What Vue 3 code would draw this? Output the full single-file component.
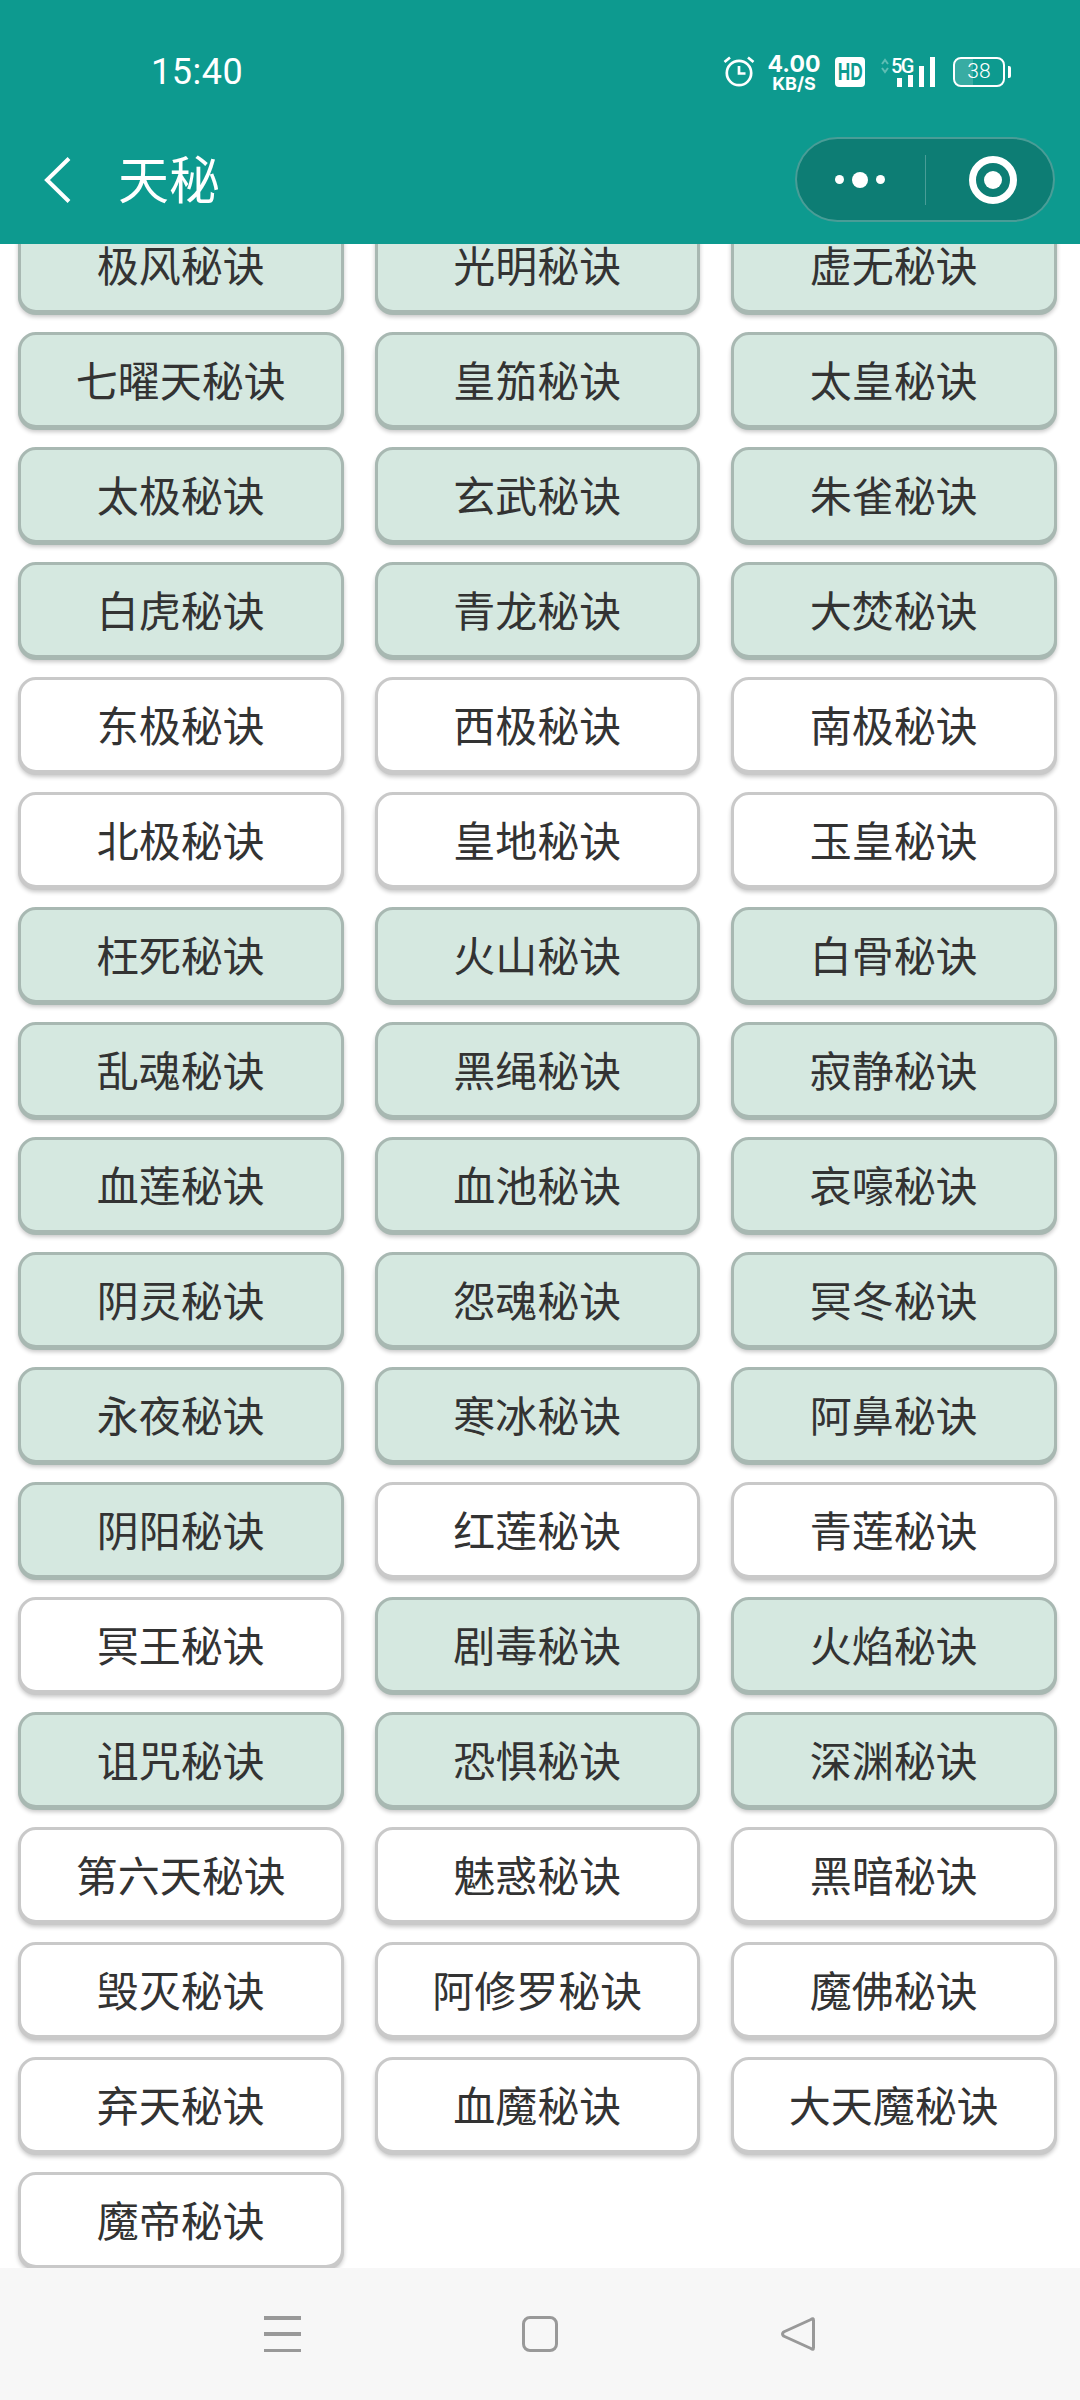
<script setup>
// g = 已学 (green), w = not yet
const rows = [
  ['g', '极风秘诀', '光明秘诀', '虚无秘诀'],
  ['g', '七曜天秘诀', '皇笳秘诀', '太皇秘诀'],
  ['g', '太极秘诀', '玄武秘诀', '朱雀秘诀'],
  ['g', '白虎秘诀', '青龙秘诀', '大焚秘诀'],
  ['w', '东极秘诀', '西极秘诀', '南极秘诀'],
  ['w', '北极秘诀', '皇地秘诀', '玉皇秘诀'],
  ['g', '枉死秘诀', '火山秘诀', '白骨秘诀'],
  ['g', '乱魂秘诀', '黑绳秘诀', '寂静秘诀'],
  ['g', '血莲秘诀', '血池秘诀', '哀嚎秘诀'],
  ['g', '阴灵秘诀', '怨魂秘诀', '冥冬秘诀'],
  ['g', '永夜秘诀', '寒冰秘诀', '阿鼻秘诀'],
  ['gww', '阴阳秘诀', '红莲秘诀', '青莲秘诀'],
  ['wgg', '冥王秘诀', '剧毒秘诀', '火焰秘诀'],
  ['g', '诅咒秘诀', '恐惧秘诀', '深渊秘诀'],
  ['w', '第六天秘诀', '魅惑秘诀', '黑暗秘诀'],
  ['w', '毁灭秘诀', '阿修罗秘诀', '魔佛秘诀'],
  ['w', '弃天秘诀', '血魔秘诀', '大天魔秘诀'],
  ['w', '魔帝秘诀']
];

const items = rows.flatMap((r) => {
  const flags = r[0];
  return r.slice(1).map((name, i) => ({
    name,
    on: (flags[i] || flags[0]) === 'g'
  }));
});
</script>

<template>
  <div class="page">
    <header class="top">
      <div class="status">
        <span class="time">15:40</span>
        <div class="status-right">
          <svg class="alarm" width="32" height="34" viewBox="0 0 32 34" fill="none" stroke="#fff">
            <circle cx="16" cy="19" r="12.2" stroke-width="2.7" />
            <path d="M16 12v7.5h6.5" stroke-width="2.7" />
            <path d="M1.5 8l5.5-4.5M30.5 8L25 3.5" stroke-width="2.7" />
          </svg>
          <div class="speed">
            <span class="speed-num">4.00</span>
            <span class="speed-unit">KB/S</span>
          </div>
          <div class="hd"><span>HD</span></div>
          <div class="signal">
            <svg class="arrows" width="8" height="16" viewBox="0 0 8 16" fill="none" stroke="#5fbdb4" stroke-width="2">
              <path d="M1 6l3-4 3 4M1 10l3 4 3-4" />
            </svg>
            <span class="fiveg">5G</span>
            <svg class="bars" width="39" height="30" viewBox="0 0 39 30" fill="#fff">
              <rect x="0" y="21" width="5" height="9" />
              <rect x="11" y="18" width="5" height="12" />
              <rect x="22" y="9" width="5" height="21" />
              <rect x="33" y="0" width="5" height="30" />
            </svg>
          </div>
          <div class="battery">
            <div class="battery-body">
              <i class="battery-fill"></i>
              <span class="battery-num">38</span>
            </div>
            <i class="battery-tip"></i>
          </div>
        </div>
      </div>

      <div class="bar">
        <svg class="back" width="28" height="46" viewBox="0 0 28 46" fill="none" stroke="#fff" stroke-width="4">
          <path d="M26 1.5L4 23l22 21.5" />
        </svg>
        <span class="title">天秘</span>
        <div class="capsule">
          <div class="cap-left">
            <i class="dot"></i>
            <i class="dot big"></i>
            <i class="dot"></i>
          </div>
          <i class="cap-line"></i>
          <div class="cap-right">
            <svg width="50" height="50" viewBox="0 0 50 50">
              <circle cx="25" cy="25" r="20.5" fill="none" stroke="#fff" stroke-width="7" />
              <circle cx="25" cy="25" r="9" fill="#fff" />
            </svg>
          </div>
        </div>
      </div>
    </header>

    <main class="list">
      <div class="grid">
        <div v-for="item in items" :key="item.name" class="cell" :class="{ on: item.on }">
          {{ item.name }}
        </div>
      </div>
    </main>

    <footer class="nav">
      <div class="nav-menu"><i></i><i></i><i></i></div>
      <div class="nav-home"></div>
      <svg class="nav-back" width="36" height="36" viewBox="0 0 36 36" fill="none" stroke="#999" stroke-width="3" stroke-linejoin="round">
        <path d="M33.5 4.5v27q0 3-2.5 1L3.5 20q-2-2 0-4L31 3.5q2.500-2 2.500 1z" />
      </svg>
    </footer>
  </div>
</template>

<style scoped>
.page {
  width: 1080px;
  height: 2400px;
  display: flex;
  flex-direction: column;
  overflow: hidden;
  background: #fff;
  font-family: "Noto Sans CJK SC", "Noto Sans", sans-serif;
}

/* 顶部 */
.top {
  height: 244px;
  flex: none;
  background: #0d9a8f;
  color: #fff;
}

.status {
  height: 137px;
  box-sizing: border-box;
  padding: 0 69px 0 151px;
  display: flex;
  justify-content: space-between;
  align-items: flex-start;
}

.time {
  margin-top: 50px;
  font-family: Roboto, sans-serif;
  font-size: 36px;
  line-height: 44px;
  letter-spacing: 0.5px;
}

.status-right {
  margin-top: 54px;
  display: flex;
  align-items: flex-start;
}

.speed {
  width: 52px;
  margin: -1px 0 0 13px;
  display: flex;
  flex-direction: column;
  align-items: center;
  font-family: Inter, sans-serif;
  font-weight: 700;
  line-height: 1;
}

.speed-num {
  font-size: 23px;
  line-height: 22px;
}

.speed-unit {
  font-size: 18px;
  line-height: 18px;
}

.hd {
  width: 30px;
  height: 30px;
  margin: 3px 0 0 15px;
  border-radius: 4px;
  background: #fff;
  color: #0d9a8f;
  font-family: "Liberation Sans", sans-serif;
  font-weight: 700;
  font-size: 24px;
  line-height: 30px;
  display: flex;
  justify-content: center;
}

/* letras estrechas como el icono real */
.hd span {
  display: inline-block;
  transform: scaleX(0.72);
}

.signal {
  position: relative;
  width: 56px;
  height: 30px;
  margin: 3px 0 0 15px;
}

.arrows {
  position: absolute;
  left: 1px;
  top: 1px;
}

.fiveg {
  position: absolute;
  left: 11px;
  top: -1px;
  font-family: Roboto, sans-serif;
  font-size: 20px;
  font-weight: 500;
  line-height: 20px;
  letter-spacing: -1.5px;
}

.bars {
  position: absolute;
  left: 17px;
  top: 0;
}

.battery {
  margin: 3px 0 0 17px;
  display: flex;
  align-items: center;
  gap: 3px;
}

.battery-body {
  position: relative;
  width: 52px;
  height: 30px;
  box-sizing: border-box;
  border: 2.5px solid #fff;
  border-radius: 8px;
  text-align: center;
  overflow: hidden;
}

.battery-fill {
  position: absolute;
  left: 0;
  top: 0;
  bottom: 0;
  width: 38%;
  background: rgba(255, 255, 255, 0.18);
}

.battery-num {
  position: relative;
  display: block;
  font-family: Roboto, sans-serif;
  font-weight: 300;
  font-size: 21px;
  line-height: 25px;
}

.battery-tip {
  width: 3px;
  height: 12px;
  background: #fff;
  border-radius: 0 2px 2px 0;
}

.bar {
  height: 107px;
  box-sizing: border-box;
  padding: 0 25px 22px 43px;
  display: flex;
  align-items: center;
}

.back {
  flex: none;
}

.title {
  margin: 0 0 5px 47px;
  font-size: 51px;
  line-height: 60px;
}

.capsule {
  width: 260px;
  height: 85px;
  margin-left: auto;
  box-sizing: border-box;
  border: 2px solid rgba(255, 255, 255, 0.25);
  border-radius: 43px;
  background: #0d7d74;
  display: flex;
  align-items: center;
}

.cap-left {
  width: 126px;
  display: flex;
  justify-content: center;
  align-items: center;
  gap: 8px;
}

.dot {
  width: 9px;
  height: 9px;
  border-radius: 50%;
  background: #fff;
}

.dot.big {
  width: 16px;
  height: 16px;
}

.cap-line {
  width: 1px;
  height: 50px;
  margin-left: 2px;
  background: rgba(255, 255, 255, 0.25);
}

.cap-right {
  flex: 1;
  padding-left: 6px;
  display: flex;
  justify-content: center;
}

.cap-right svg {
  display: block;
}

/* 列表 */
.list {
  flex: 1;
  min-height: 0;
  overflow: hidden;
}

.grid {
  margin-top: -27px;
  padding-left: 18px;
  display: grid;
  grid-template-columns: repeat(3, 325.5px);
  grid-auto-rows: 96px;
  column-gap: 31px;
  row-gap: 19px;
}

.cell {
  box-sizing: border-box;
  padding-bottom: 3px;
  border: 3px solid #c9c9c9;
  border-radius: 18px;
  background: #fff;
  box-shadow: 0 2px 0 #c9c9c9, 0 4px 4px rgba(0, 0, 0, 0.22);
  color: #333;
  font-size: 42px;
  display: flex;
  align-items: center;
  justify-content: center;
}

.cell.on {
  background: #d5e8e0;
  border-color: #a8b8b2;
  box-shadow: 0 2px 0 #a8b8b2, 0 4px 4px rgba(0, 0, 0, 0.22);
}

/* 底部导航 */
.nav {
  height: 132px;
  flex: none;
  position: relative;
  background: #f7f7f7;
}

.nav-menu {
  position: absolute;
  left: 264px;
  top: 48px;
  width: 37px;
  height: 36px;
  display: flex;
  flex-direction: column;
  justify-content: space-between;
}

.nav-menu i {
  height: 3.5px;
  background: #999;
}

.nav-home {
  position: absolute;
  left: 522px;
  top: 48px;
  width: 36px;
  height: 36px;
  box-sizing: border-box;
  border: 3px solid #999;
  border-radius: 8px;
}

.nav-back {
  position: absolute;
  left: 780px;
  top: 48px;
}
</style>
